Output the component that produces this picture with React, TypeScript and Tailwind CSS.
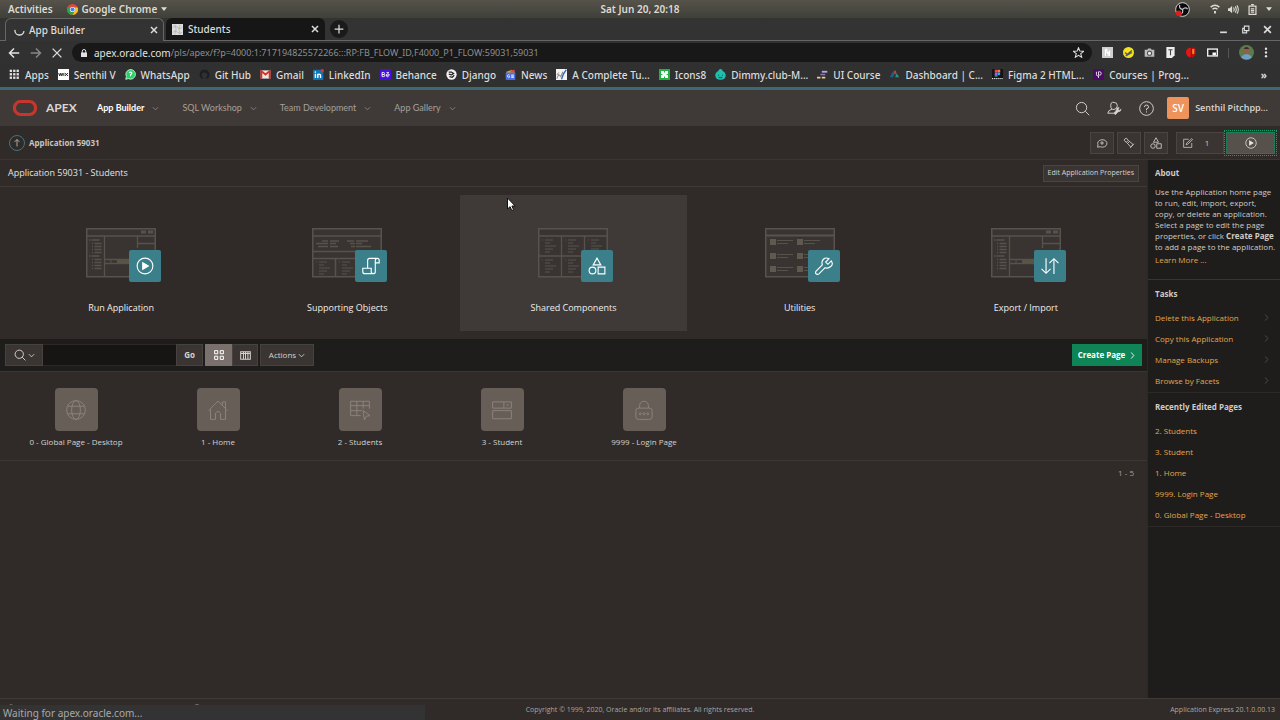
import React, { useState } from 'react';

/* ---------- small line icons ---------- */

function Icon({ className = 'size-4', sw = 1, children }: { className?: string; sw?: number; children: React.ReactNode }) {
  return (
    <svg viewBox="0 0 16 16" className={className + ' shrink-0'} fill="none" stroke="currentColor" strokeWidth={sw} aria-hidden="true">
      {children}
    </svg>
  );
}

const Chevron = ({ className = 'size-2' }: { className?: string }) => (
  <Icon className={className} sw={2}><path d="M2 5l6 6 6-6" /></Icon>
);

const ChevronRight = ({ className = 'size-2' }: { className?: string }) => (
  <Icon className={className} sw={2}><path d="M5 1l6 7-6 7" /></Icon>
);

const SearchShape = () => (
  <>
    <circle cx="7" cy="7" r="5.5" />
    <path d="M11 11l4.2 4.2" />
  </>
);

const PlayShape = () => (
  <>
    <circle cx="8" cy="8" r="7" />
    <path d="M6 5l5 3-5 3z" fill="currentColor" />
  </>
);

const ShapesShape = () => (
  <>
    <path d="M8 1L4.6 7h6.8z" />
    <circle cx="4" cy="12" r="3" />
    <path d="M9 9h6v6H9z" />
  </>
);

/* ---------- bookmark favicons ---------- */

const favicons: Record<string, React.ReactNode> = {
  apps: (
    <g fill="#e0e0e0">
      {[1, 6, 11].map((y) => [1, 6, 11].map((x) => <rect key={x + '-' + y} x={x} y={y} width="3.4" height="3.4" />))}
    </g>
  ),
  wix: (
    <>
      <rect width="16" height="16" fill="#fff" />
      <path d="M1 6l1.5 4L4 6l1.5 4L7 6M8.5 6v4M10 6l4.5 4M14.5 6L10 10" stroke="#111" strokeWidth="1.3" fill="none" />
    </>
  ),
  whatsapp: (
    <>
      <path d="M1 15l1-4a7 7 0 1 1 3 3z" fill="#25d366" stroke="#fff" strokeWidth="1" />
      <path d="M6 5.5q2-2 4 0q.5 1.5-2 3v2" stroke="#fff" strokeWidth="1.6" fill="none" />
    </>
  ),
  github: (
    <path d="M8 1a7 7 0 0 0-2.5 13.6v-2.6c-2-1-2.5-5 0-6.5q2.5-.8 5 0c2.5 1.5 2 5.5 0 6.5v2.6A7 7 0 0 0 8 1z" fill="#1b1f23" />
  ),
  gmail: (
    <>
      <rect x="1" y="2" width="14" height="12" fill="#e8e8e8" />
      <path d="M2 14V3l6 5 6-5v11" stroke="#d93025" strokeWidth="2.6" fill="none" />
    </>
  ),
  linkedin: (
    <>
      <rect y="1" width="15" height="15" rx="1" fill="#0a76b8" />
      <path d="M3.5 7v6M7 13V7m0 3q0-2.5 2-2.5t2 2.5v3" stroke="#fff" strokeWidth="2" fill="none" />
      <rect x="2.5" y="3.5" width="2" height="2" fill="#fff" />
      <circle cx="13.5" cy="2.5" r="2.5" fill="#d33" />
    </>
  ),
  behance: (
    <>
      <rect width="16" height="16" rx="2" fill="#4610e0" />
      <path d="M3 5v6h2.5a1.5 1.5 0 0 0 0-3H3h2a1.5 1.5 0 0 0 0-3zM9 9h4.5a2.2 2.2 0 1 0-1 2M9.5 5h3.5" stroke="#fff" strokeWidth="1.3" fill="none" />
    </>
  ),
  django: (
    <>
      <circle cx="8" cy="8" r="7.5" fill="#f2f2f2" />
      <path d="M4 4.5h4l3 2-3 2-4-1M5 11l4 1 3-3" stroke="#222" strokeWidth="1.8" fill="none" />
    </>
  ),
  news: (
    <>
      <path d="M2 4l8-3 4 3v4H2z" fill="#e2a52c" />
      <path d="M8 2l6-1v4H8z" fill="#d9483b" />
      <rect x="1" y="5" width="14" height="11" rx="1" fill="#4b6fe0" />
      <path d="M6.5 8.5a2 2 0 1 0 0 3.5v-1.5H5.5M9 8.8h4M9 10.5h4M9 12.2h4" stroke="#fff" strokeWidth="1.2" fill="none" />
    </>
  ),
  complete: (
    <>
      <rect width="16" height="16" fill="#f4f4f4" />
      <path d="M1 14l3-6 3 3 3-7" stroke="#888" strokeWidth="1.5" fill="none" />
      <path d="M8 15l3-8 4-6" stroke="#3668b0" strokeWidth="2" fill="none" />
      <path d="M1 9l3-4" stroke="#c33" strokeWidth="1" />
    </>
  ),
  icons8: (
    <>
      <rect width="16" height="16" fill="#1fb141" />
      <path d="M4 4h8v8H4z" fill="#fff" stroke="#fff" strokeWidth="2" />
      <path d="M8 3v2M8 11v2M3 8h2M11 8h2" stroke="#1fb141" strokeWidth="1.5" />
    </>
  ),
  dimmy: (
    <>
      <path d="M8 0c2 0 3 1.5 3 3 3 1 5 4 4.5 7S13 15.5 8 15.5 1 13 .5 10 2 4 5 3c0-1.5 1-3 3-3z" fill="#1fbfae" />
      <path d="M4.5 9H6M10 9h1.5M5.5 12q2.5 1.5 5 0" stroke="#0c5a54" strokeWidth="1.5" fill="none" />
    </>
  ),
  uicourse: (
    <>
      <path d="M7 4h8" stroke="#b9a6e8" strokeWidth="2.6" />
      <path d="M5 8h7" stroke="#8b7ab8" strokeWidth="2" />
      <path d="M0 12.5h5M7 12.5h5" stroke="#f0c987" strokeWidth="2.6" />
    </>
  ),
  dashboard: (
    <>
      <path d="M1 12l5-9 2 4-2 5z" fill="#1f5f86" />
      <path d="M7 3l3-1 1 5-3 1z" fill="#b0483a" />
      <path d="M9 12l2-6 4 6z" fill="#2f8f8a" />
    </>
  ),
  figma: (
    <>
      <rect width="16" height="16" fill="#141414" />
      <path d="M4 1h4v4H4z" fill="#f24e1e" />
      <path d="M8 1h4v4H8z" fill="#ff7262" />
      <path d="M4 5h4v4H4z" fill="#a259ff" />
      <circle cx="10" cy="7" r="2" fill="#1abcfe" />
      <path d="M4 9h4v2H4z" fill="#0acf83" />
      <path d="M0 14h16" stroke="#ddd" strokeWidth="2" strokeDasharray="2 1" />
    </>
  ),
  courses: (
    <>
      <rect width="16" height="16" fill="#4a0a66" />
      <path d="M5 4v4q0 2 2 2h1v3M8 9V4h1.5a2.5 2.5 0 0 1 0 5z" stroke="#fff" strokeWidth="1.2" fill="none" />
    </>
  ),
};

const bookmarks = [
  { icon: 'apps', label: 'Apps' },
  { icon: 'wix', label: 'Senthil V' },
  { icon: 'whatsapp', label: 'WhatsApp' },
  { icon: 'github', label: 'Git Hub' },
  { icon: 'gmail', label: 'Gmail' },
  { icon: 'linkedin', label: 'LinkedIn' },
  { icon: 'behance', label: 'Behance' },
  { icon: 'django', label: 'Django' },
  { icon: 'news', label: 'News' },
  { icon: 'complete', label: 'A Complete Tu...' },
  { icon: 'icons8', label: 'Icons8' },
  { icon: 'dimmy', label: 'Dimmy.club-M...' },
  { icon: 'uicourse', label: 'UI Course' },
  { icon: 'dashboard', label: 'Dashboard | C...' },
  { icon: 'figma', label: 'Figma 2 HTML...' },
  { icon: 'courses', label: 'Courses | Prog...' },
];

/* ---------- desktop bar and browser ---------- */

function DesktopBar() {
  return (
    <div className="grid h-[18px] grid-cols-3 items-center bg-linear-to-b from-[#55534a] to-[#403f3a] px-2 text-[10px] leading-4 font-semibold text-[#dedbd3]">
      <div className="flex items-center gap-[14px]">
        <button type="button">Activities</button>
        <button type="button" className="flex items-center gap-1">
          <svg viewBox="0 0 16 16" className="size-[11px]" aria-hidden="true">
            <circle cx="8" cy="8" r="8" fill="#dd4b3e" />
            <path d="M1 4.2A8 8 0 0 0 8 16l3.5-6z" fill="#2ba24c" />
            <path d="M15.5 5A8 8 0 0 1 8 16l3.5-6L10 5z" fill="#fbc116" />
            <circle cx="8" cy="8" r="3.8" fill="#fff" />
            <circle cx="8" cy="8" r="3" fill="#4285f4" />
          </svg>
          Google Chrome
          <svg viewBox="0 0 8 5" className="h-1 w-[6px]" aria-hidden="true"><path d="M0 0h8L4 5z" fill="currentColor" /></svg>
        </button>
      </div>
      <time className="text-center">Sat Jun 20, 20:18</time>
      <div className="flex items-center justify-end gap-2">
        <svg viewBox="0 0 16 16" className="mr-3 size-[15px]" aria-hidden="true">
          <circle cx="8" cy="8" r="7.3" fill="#0b0b0b" stroke="#ddd" />
          <path d="M8 8q-4-1-3-5M8 8q3-3 5.5-.5M8 8q1 4-2 5" stroke="#ccc" strokeWidth="1.2" fill="none" />
          <circle cx="4" cy="12" r="3" fill="#e01b1b" />
        </svg>
        <svg viewBox="0 0 16 16" className="size-[10px]" fill="none" stroke="currentColor" strokeWidth="2.2" aria-hidden="true">
          <path d="M1 5q7-6 14 0" /><path d="M4 8.5q4-3.5 8 0" /><path d="M6.5 11h3v4h-3z" fill="currentColor" stroke="none" />
        </svg>
        <svg viewBox="0 0 16 16" className="size-[11px]" fill="none" stroke="currentColor" strokeWidth="1.6" aria-hidden="true">
          <path d="M0 6h2.5L6 2.5v11L2.5 10H0z" fill="currentColor" stroke="none" />
          <path d="M8 5q2 3 0 6M10.5 3.5q3 4.5 0 9M13 2q4 6 0 12" />
        </svg>
        <svg viewBox="0 0 16 16" className="size-[11px]" fill="none" stroke="currentColor" strokeWidth="1.8" aria-hidden="true">
          <path d="M3 3h10v12H3zM6 1h4M5.5 7h5M5.5 9.5h5M5.5 12h5" />
        </svg>
        <svg viewBox="0 0 8 5" className="h-1 w-[6px]" aria-hidden="true"><path d="M0 0h8L4 5z" fill="currentColor" /></svg>
      </div>
    </div>
  );
}

function TabStrip() {
  return (
    <div className="flex h-[23px] items-stretch border-b border-[#666] bg-[#333] pl-[5px] text-[10px] leading-4 font-medium text-[#dcdcdc]">
      <div role="tablist" className="flex gap-[2px]">
        <button type="button" role="tab" aria-selected="true" className="-mb-px flex w-[159px] items-center rounded-t-md border border-b-0 border-[#666] bg-[#333] pr-[5px] pl-2">
          <Icon className="size-[11px]" sw={2}><path d="M1.5 7a6.5 6.5 0 0 0 13 2" /></Icon>
          <span className="ml-1 flex-1 text-left">App Builder</span>
          <Icon className="size-2" sw={3}><path d="M2 2l12 12M14 2L2 14" /></Icon>
        </button>
        <button type="button" role="tab" aria-selected="false" className="flex w-[159px] items-center rounded-t-md bg-[#161616] pr-[6px] pl-[6px]">
          <svg viewBox="0 0 16 16" className="size-[11px]" aria-hidden="true">
            <rect width="16" height="16" fill="#ddd" />
            <path d="M1 5q4-4 7 0t7 0M1 12q4-4 7 0t7 0M4 1q4 7 0 14M12 1q-4 7 0 14" stroke="#aaa" fill="none" />
          </svg>
          <span className="ml-[5px] flex-1 text-left">Students</span>
          <Icon className="size-2" sw={3}><path d="M2 2l12 12M14 2L2 14" /></Icon>
        </button>
      </div>
      <button type="button" aria-label="New tab" className="ml-[5px] flex size-[18px] items-center justify-center self-center rounded-full bg-[#1a1a1a]">
        <Icon className="size-[10px]" sw={2}><path d="M8 1v14M1 8h14" /></Icon>
      </button>
      <div className="ml-auto flex items-center gap-[13px] pr-2">
        <button type="button" aria-label="Minimize"><Icon className="size-[9px]" sw={3}><path d="M2 13h12" /></Icon></button>
        <button type="button" aria-label="Restore"><Icon className="size-[9px]" sw={2}><path d="M6 2h8v8H6zM6 6H3v8h7v-4" /></Icon></button>
        <button type="button" aria-label="Close"><Icon className="size-[9px]" sw={3}><path d="M2 2l12 12M14 2L2 14" /></Icon></button>
      </div>
    </div>
  );
}

function AddressBar() {
  return (
    <div className="flex h-[23px] items-center bg-[#313131] pr-3 pl-2 text-[10px] leading-4 text-[#e2e2e2]">
      <div className="flex w-16 items-center gap-[10px]">
        <button type="button" aria-label="Back"><Icon className="size-3" sw={2}><path d="M15 8H2M8 2L2 8l6 6" /></Icon></button>
        <button type="button" aria-label="Forward" className="text-[#888]"><Icon className="size-3" sw={2}><path d="M1 8h13M8 2l6 6-6 6" /></Icon></button>
        <button type="button" aria-label="Stop"><Icon className="size-[10px]" sw={2}><path d="M1 1l14 14M15 1L1 15" /></Icon></button>
      </div>
      <div className="flex h-[19px] flex-1 items-center rounded-full bg-[#181818] px-2">
        <svg viewBox="0 0 16 16" className="size-2 shrink-0" aria-hidden="true">
          <path d="M2 7h12v9H2z" fill="currentColor" /><path d="M4.5 8V4.5a3.5 3.5 0 0 1 7 0V8" stroke="currentColor" strokeWidth="2" fill="none" />
        </svg>
        <label htmlFor="url" className="ml-[6px]">apex.oracle.com</label>
        <input id="url" type="text" defaultValue="/pls/apex/f?p=4000:1:717194825572266:::RP:FB_FLOW_ID,F4000_P1_FLOW:59031,59031" className="flex-1 bg-transparent text-[9px] text-[#8f8f8f] outline-none" />
        <button type="button" aria-label="Bookmark this page"><Icon className="size-[11px]" sw={1.5}><path d="M8 1l2 5 5.5.3-4.3 3.4 1.5 5.3L8 12l-4.700 3 1.500-5.300L.5 6.300 6 6z" /></Icon></button>
      </div>
      <div className="ml-[10px] flex items-center gap-[10px]">
        <svg viewBox="0 0 16 16" className="size-[11px]" aria-hidden="true"><rect width="16" height="16" fill="#cfcfcf" /><path d="M5 13V3.5h2v4h2v5.5M11 5v8M7 9h4" stroke="#fff" strokeWidth="1.6" fill="none" /></svg>
        <svg viewBox="0 0 16 16" className="size-[11px]" aria-hidden="true"><circle cx="8" cy="8" r="8" fill="#f6e21c" /><path d="M3 8l3 3 7-6M4 13l9-5" stroke="#4b5a70" strokeWidth="2" fill="none" /></svg>
        <svg viewBox="0 0 16 16" className="size-[11px]" aria-hidden="true"><path d="M1 4h4l1-2h4l1 2h4v10H1z" fill="#bdbdbd" /><circle cx="8" cy="9" r="3" fill="#eee" stroke="#555" strokeWidth="1.5" /></svg>
        <svg viewBox="0 0 16 16" className="size-[11px]" aria-hidden="true"><path d="M2 0h12v12l-4 4H2z" fill="#eee" /><path d="M5 4h6M8 4v8" stroke="#444" strokeWidth="1.6" fill="none" /></svg>
        <svg viewBox="0 0 16 16" className="size-[11px]" aria-hidden="true"><path d="M7 1A7 7 0 0 0 7 15z" fill="#e11" /><path d="M8 1h5q4 9-3 14H8z" fill="#b8150d" /><path d="M9 3h3v7H9z" fill="#f08a1c" /></svg>
        <svg viewBox="0 0 16 16" className="size-[11px]" aria-hidden="true"><rect y="2" width="16" height="12" fill="#eee" /><rect x="2" y="4" width="12" height="8" fill="#222" /><rect x="8" y="8" width="5" height="4" fill="#fff" /></svg>
        <span className="h-[10px] w-px bg-[#555]" />
        <svg viewBox="0 0 16 16" className="size-[15px]" aria-hidden="true"><circle cx="8" cy="8" r="8" fill="#5d7a4c" /><circle cx="8" cy="6" r="3.5" fill="#8c6248" /><path d="M5 4q3-3 6 0z" fill="#1d1a18" /><path d="M2 13q6-7 12 0-6 5-12 0z" fill="#6f9fc8" /></svg>
        <button type="button" aria-label="Browser menu"><svg viewBox="0 0 4 16" className="h-[11px] w-1" fill="currentColor" aria-hidden="true"><circle cx="2" cy="2.5" r="1.7" /><circle cx="2" cy="8" r="1.7" /><circle cx="2" cy="13.5" r="1.7" /></svg></button>
      </div>
    </div>
  );
}

function Bookmarks() {
  return (
    <nav aria-label="Bookmarks" className="flex h-[23px] items-center gap-[9px] bg-[#303030] px-[9px] pb-[2px] text-[10px] leading-4 font-medium text-[#dcdcdc]">
      {bookmarks.map((b) => (
        <a key={b.label} href="#" className="flex items-center gap-[5px] whitespace-nowrap">
          <svg viewBox="0 0 16 16" className="size-[11px] shrink-0" aria-hidden="true">{favicons[b.icon]}</svg>
          {b.label}
        </a>
      ))}
      <button type="button" className="mr-1 ml-auto font-bold">»</button>
    </nav>
  );
}

/* ---------- APEX header ---------- */

const menus = ['App Builder', 'SQL Workshop', 'Team Development', 'App Gallery'];

function ApexHeader() {
  return (
    <header className="flex h-9 items-center bg-[#3f3a37] px-3 text-[9px] leading-4">
      <svg viewBox="0 0 26 18" className="h-[18px] w-[26px]" aria-hidden="true"><rect x="2.5" y="2.5" width="21" height="13" rx="6" fill="none" stroke="#c8352c" strokeWidth="3.2" /></svg>
      <span className="ml-2 w-[51px] font-['Lato',sans-serif] text-[12px] font-bold text-[#d8d5d2]">APEX</span>
      <nav className="flex gap-[23px] font-['Lato',sans-serif]">
        {menus.map((m, i) => (
          <button key={m} type="button" className={i === 0 ? 'flex items-center gap-2 font-bold text-white' : 'flex items-center gap-2 text-[#a5a09b]'}>
            {m}
            <Chevron className="size-[7px] text-[#8d8883]" />
          </button>
        ))}
      </nav>
      <div className="ml-auto flex items-center gap-[17px] text-[#d8d5d2]">
        <button type="button" aria-label="Search"><Icon className="size-[15px]"><SearchShape /></Icon></button>
        <button type="button" aria-label="Administration">
          <Icon className="size-[15px]"><path d="M7.5 1.5q3.5 0 3.5 3.5T7.5 9 4 5t3.5-3.5zM5.5 8.5Q1 10 .8 13h8M11 11.5l-2.5 3" /><path d="M15 8.5l-2 1.5-1-1 1-2q-3-.5-3 2.5L7.5 13 9 14.5l3-3q3 0 3-3z" fill="currentColor" strokeWidth=".5" /></Icon>
        </button>
        <button type="button" aria-label="Help"><Icon className="size-[15px]"><circle cx="8" cy="8" r="7.3" /><path d="M5.8 6.5q0-2.2 2.2-2.2t2.2 2Q10.2 8 8 8.3v1.5M8 11v1.3" /></Icon></button>
        <button type="button" className="-ml-1 flex items-center gap-[6px] font-semibold">
          <span className="flex size-[22px] items-center justify-center rounded-xs bg-[#ef935c] text-[10px] text-white">SV</span>
          Senthil Pitchpp...
        </button>
      </div>
    </header>
  );
}

function BreadcrumbBar() {
  const box = 'flex h-[22px] items-center justify-center border border-[#4a4542] bg-[#3a3532]';
  return (
    <div className="flex h-[34px] items-center border-b border-[#3b3633] pr-2 pl-[9px] text-[8px] leading-4 text-[#c9c5c1]">
      <a href="#" className="flex items-center gap-1 font-bold">
        <span className="flex size-[16px] items-center justify-center rounded-full border border-[#41747a]">
          <Icon className="size-2" sw={1.6}><path d="M8 15V1M3 6l5-5 5 5" /></Icon>
        </span>
        Application 59031
      </a>
      <div className="-mr-[5px] ml-auto flex items-center gap-[3px]">
        <button type="button" aria-label="Feedback" className={box + ' w-6'}><Icon className="size-3" sw={1.2}><path d="M2 13.5l.7-3A6.2 5 0 1 1 5.5 13zM8 5.5v5M5.5 8h5" /></Icon></button>
        <button type="button" aria-label="Find" className={box + ' w-6'}><Icon className="size-3" sw={1.2}><path d="M1.5 4.5q.5-2.5 3-3L7 4.500 13.500 10 10.500 13.500 4.500 7zM4.500 7L7 4.500M9.500 14.500l5-5.500M6.500 6.500L8 8" /></Icon></button>
        <button type="button" aria-label="Shared components" className={box + ' w-6'}><Icon className="size-3" sw={1.2}><ShapesShape /></Icon></button>
        <button type="button" className={box + ' ml-[5px] w-12 gap-3 pr-2'}>
          <Icon className="size-[10px]" sw={1.3}><path d="M14 8v7H1V2h8M5 11l1-3 8-7 1.5 1.5-8 7.5z" /></Icon>
          1
        </button>
        <button type="button" aria-label="Run page" className="-ml-[3px] flex h-[26px] w-[53px] items-center justify-center border border-dotted border-[#13a06c] p-px">
          <span className="flex h-full w-full items-center justify-center border border-[#1f7a58] bg-[#57514c] text-[#e8e5e2]"><Icon className="size-3"><PlayShape /></Icon></span>
        </button>
      </div>
    </div>
  );
}

/* ---------- wireframe illustrations behind the badges ---------- */

const line = '#57524c';

const lines = (x: number, y: number) => (
  <path d={`M${x} ${y}h1M${x + 3} ${y}h8M${x + 3} ${y + 3}h5M${x + 3} ${y + 6}h11M${x + 3} ${y + 9}h8M${x + 3} ${y + 12}h5`} stroke={line} />
);

const wireframes: Record<string, React.ReactNode> = {
  builder: (
    <>
      <path d="M1 8h68M18.5 8v41M51.5 8v12M51.5 15.5h18M18.5 31.5h33M18.5 35.5h33" stroke={line} strokeWidth="1.3" />
      <path d="M55 4h5M62 4h5" stroke={line} strokeWidth="3" />
      <path d="M3 12h1.5M5.5 12h8M6 15.5h1M8.5 15.5h7M6 18.5h1M8.5 18.5h7M6 21.5h1M8.5 21.5h7M6 24.5h1M8.5 24.5h7M3 28h1.5M5.5 28h8M6 31.5h1M8.5 31.5h7M6 34.5h1M8.5 34.5h7M6 37.5h1M8.5 37.5h7M6 40.5h1M8.5 40.5h7" stroke={line} strokeWidth="1.3" />
      <path d="M31 33.5h16" stroke="#5a5347" strokeWidth="3" />
      <path d="M25 32v3" stroke={line} />
    </>
  ),
  objects: (
    <>
      <path d="M1 8h68M1 23.5h68M1 30.5h68M23.5 30v19" stroke={line} strokeWidth="1.5" />
      <path d="M10 13h6M18 13h9M4 15.5h12M18 15.5h6M6 18.5h10M18 18.5h8M35 13h7M44 13h12M38 15.5h5M44 15.5h6M39 18.5h4M44 18.5h15" stroke={line} strokeWidth="1.3" />
      {lines(4, 34)}
      {lines(27, 34)}
    </>
  ),
  shared: (
    <>
      <path d="M1 8h68M1 28h68M23.5 8v41M46.5 8v41" stroke={line} strokeWidth="1.3" />
      {lines(4, 12)}
      {lines(27, 12)}
      {lines(50, 12)}
      {lines(4, 32)}
      {lines(27, 32)}
    </>
  ),
  utilities: (
    <>
      <path d="M1 7.5h68" stroke={line} strokeWidth="2" />
      {[11, 25, 38].map((y) => [5, 32].map((x) => (
        <g key={x + '-' + y}>
          <rect x={x} y={y} width="6" height="6" fill="#5f594f" />
          <path d={`M${x + 7} ${y + 1.5}h16M${x + 7} ${y + 4.5}h11`} stroke={line} />
        </g>
      )))}
    </>
  ),
};

const badgeIcons: Record<string, React.ReactNode> = {
  play: <PlayShape />,
  scroll: <path d="M5 10V3q0-1.8 1.8-1.8h6.7q1.8 0 1.8 1.8v2.2h-3.5V3q0-1.5 1.5-1.8M11.8 5v8q0 1.8-1.8 1.8H2.5q-1.8 0-1.8-1.8v-3h7.5v3q0 1.8 1.8 1.8" />,
  shapes: <ShapesShape />,
  wrench: <path d="M14.5 3.5l-3 3-2-2 3-3q-3-1.5-5 .5T6.500 7l-5.500 5.500q-1 1.500 0 2.500t2.500 0L9 9.500q2.500 1 5-1t.5-5z" />,
  arrows: <path d="M4.5 1v13.5M.5 10.5l4 4 4-4M11.5 15V1.5M7.5 5.5l4-4 4 4" />,
};

const actions = [
  { label: 'Run Application', art: 'builder', badge: 'play' },
  { label: 'Supporting Objects', art: 'objects', badge: 'scroll' },
  { label: 'Shared Components', art: 'shared', badge: 'shapes', active: true },
  { label: 'Utilities', art: 'utilities', badge: 'wrench' },
  { label: 'Export / Import', art: 'builder', badge: 'arrows' },
];

function ActionCards() {
  return (
    <section className="grid grid-cols-5 p-2">
      {actions.map((a) => (
        <a key={a.label} href="#" className={a.active ? 'flex h-[136px] flex-col items-center bg-[#3f3a37] pt-[33px]' : 'flex h-[136px] flex-col items-center pt-[33px]'}>
          <div className="relative">
            <svg viewBox="0 0 70 50" className="h-[50px] w-[70px]" fill="none" aria-hidden="true">
              <rect x=".75" y=".75" width="68.5" height="48" fill="#393431" stroke={line} strokeWidth="1.5" />
              {wireframes[a.art]}
            </svg>
            <span className="absolute -right-[5px] -bottom-1 flex size-8 items-center justify-center rounded-xs bg-[#3a7f8a] text-white">
              <Icon className="size-[18px]">{badgeIcons[a.badge]}</Icon>
            </span>
          </div>
          <span className="mt-[22px] text-[9px] leading-4 text-[#f0edea]">{a.label}</span>
        </a>
      ))}
    </section>
  );
}

/* ---------- page report ---------- */

const pageIcons: Record<string, React.ReactNode> = {
  globe: <><circle cx="8" cy="8" r="7.5" /><ellipse cx="8" cy="8" rx="3.5" ry="7.5" /><path d="M1.3 5h13.4M1.3 11h13.4" /></>,
  home: <path d="M.5 8.5L8 .8l7.5 7.7M2 7.500v8h4v-5q2-2.500 4 0v5h4v-8M11.500 4V1.500h2.500V7" />,
  grid: <path d="M8.5 12.5H.5V1h15v6M.5 4.5h15M.5 8.5h9M5.5 1v11.5M10.5 1v6M10.5 8.5l5.5 4-3 .5-1.5 3z" />,
  form: <path d="M.5 1.5h15v5H.5zM.5 8.5h15v6.5H.5zM9.5 1.5v5M11.5 4h2" />,
  lock: <><rect x="1.5" y="6.5" width="13" height="9" rx="2" /><path d="M4.5 6.5V4.5a3.5 3.5 0 0 1 7 0v2" /><circle cx="5" cy="11" r=".8" /><circle cx="8" cy="11" r=".8" /><circle cx="11" cy="11" r=".8" /></>,
};

const pages = [
  { icon: 'globe', label: '0 - Global Page - Desktop' },
  { icon: 'home', label: '1 - Home' },
  { icon: 'grid', label: '2 - Students' },
  { icon: 'form', label: '3 - Student' },
  { icon: 'lock', label: '9999 - Login Page' },
];

function ReportToolbar() {
  const [query, setQuery] = useState('');
  const btn = 'flex h-[22px] items-center justify-center border border-[#47423f] bg-[#3a3532]';
  return (
    <div className="flex h-[33px] items-center border-b border-[#3b3633] bg-[#1f1d1b] px-[5px] text-[8px] leading-4 text-[#d6d2ce]">
      <button type="button" aria-label="Search columns" className={btn + ' w-[38px] gap-[2px]'}>
        <Icon className="size-3" sw={1.3}><SearchShape /></Icon>
        <Chevron className="size-[7px]" />
      </button>
      <input type="text" aria-label="Search" value={query} onChange={(e) => setQuery(e.target.value)} className="h-[22px] w-[133px] border-y border-[#2b2826] bg-[#171513] px-1 outline-none" />
      <button type="button" className={btn + ' w-[27px] font-bold'}>Go</button>
      <button type="button" aria-label="View icons" className="ml-[2px] flex h-[22px] w-[27px] items-center justify-center bg-[#7b716c] text-white">
        <Icon className="size-[10px]" sw={1.6}><path d="M1 1h5v5H1zM10 1h5v5h-5zM1 10h5v5H1zM10 10h5v5h-5z" /></Icon>
      </button>
      <button type="button" aria-label="View report" className={btn + ' w-[26px]'}>
        <Icon className="size-[11px]" sw={1.5}><path d="M1 2.500h14v11H1zM1 5h14M5 3v10.500M8 3v10.500M11.500 3v10.500" /></Icon>
      </button>
      <button type="button" className={btn + ' ml-[2px] w-[54px] gap-[2px]'}>Actions<Chevron className="size-[7px]" /></button>
      <button type="button" className="ml-auto flex h-[22px] w-[70px] items-center justify-center gap-1 bg-[#0e8457] font-bold text-white">
        Create Page<ChevronRight className="size-[7px]" />
      </button>
    </div>
  );
}

function PageList() {
  return (
    <>
      <ul className="flex h-[89px] border-b border-[#3b3633] px-[5px] pt-4">
        {pages.map((p) => (
          <li key={p.label} className="w-[142px]">
            <a href="#" className="flex flex-col items-center">
              <span className="flex size-[43px] items-center justify-center rounded-sm bg-[#675e58] text-[#8b827b]">
                <Icon className="size-[20px]" sw={0.8}>{pageIcons[p.icon]}</Icon>
              </span>
              <span className="mt-[3px] text-[8px] leading-4 text-[#d6d2ce]">{p.label}</span>
            </a>
          </li>
        ))}
      </ul>
      <p className="px-[13px] pt-1 text-right text-[8px] leading-4 text-[#a5a09b]">1 - 5</p>
    </>
  );
}

/* ---------- right column ---------- */

const tasks = ['Delete this Application', 'Copy this Application', 'Manage Backups', 'Browse by Facets'];
const recent = ['2. Students', '3. Student', '1. Home', '9999. Login Page', '0. Global Page - Desktop'];

function SideColumn() {
  return (
    <aside className="w-[133px] shrink-0 border-l border-[#2b2826] bg-[#1f1d1b] text-[8px] text-[#cfcbc7]">
      <section className="h-[120px] border-b border-[#393431] px-[7px] pt-[5px]">
        <h2 className="leading-4 font-bold">About</h2>
        <p className="mt-[5px] leading-[11px] whitespace-nowrap">
          Use the Application home page<br />
          to run, edit, import, export,<br />
          copy, or delete an application.<br />
          Select a page to edit the page<br />
          properties, or click <b>Create Page</b><br />
          to add a page to the application.
        </p>
        <a href="#" className="block leading-4 text-[#e2a54d]">Learn More ...</a>
      </section>
      <section className="h-[113px] border-b border-[#2c2927] px-[7px] pt-[6px]">
        <h2 className="mb-[5px] leading-4 font-bold">Tasks</h2>
        <ul className="text-[#e2a54d]">
          {tasks.map((t) => (
            <li key={t}>
              <a href="#" className="flex h-[21px] items-center justify-between">
                {t}
                <ChevronRight className="mr-[3px] size-[7px] text-[#55504c]" />
              </a>
            </li>
          ))}
        </ul>
      </section>
      <section className="h-[134px] border-b border-[#2c2927] px-[7px] pt-[6px]">
        <h2 className="mb-[5px] leading-4 font-bold">Recently Edited Pages</h2>
        <ul className="text-[#e2a54d]">
          {recent.map((r) => (
            <li key={r}>
              <a href="#" className="flex h-[21px] items-center">{r}</a>
            </li>
          ))}
        </ul>
      </section>
    </aside>
  );
}

function Footer() {
  return (
    <footer className="flex h-[22px] items-center border-t border-[#403b38] px-[5px] text-[7px] leading-4 text-[#aaa5a0]">
      <div className="flex flex-1 items-center">
        <div className="w-[131px]"><Icon className="size-3"><circle cx="8" cy="4.5" r="3.5" /><path d="M1 15q7-9 14 0" /></Icon></div>
        <div className="w-[55px]"><Icon className="size-3"><path d="M1 2h14v9H8l-4 4v-4H1z" /></Icon></div>
        <Icon className="size-3"><circle cx="8" cy="8" r="7" /></Icon>
      </div>
      <p>Copyright © 1999, 2020, Oracle and/or its affiliates. All rights reserved.</p>
      <p className="flex-1 text-right">Application Express 20.1.0.00.13</p>
    </footer>
  );
}

export default function App() {
  return (
    <div className="relative flex h-screen flex-col overflow-hidden bg-[#302b28] font-['Noto_Sans','Open_Sans',sans-serif]">
      <DesktopBar />
      <TabStrip />
      <AddressBar />
      <Bookmarks />

      <div className="flex flex-1 flex-col border-t-[3px] border-[#3c6a74] font-['Open_Sans','Noto_Sans',sans-serif]">
        <ApexHeader />
        <BreadcrumbBar />
        <div className="flex flex-1">
          <main className="min-w-0 flex-1">
            <div className="flex h-[27px] items-center justify-between border-b border-[#3f3a37] px-2">
              <h1 className="text-[9px] leading-4 text-[#e6e3e0]">Application 59031 - Students</h1>
              <button type="button" className="h-[17px] border border-[#4a4542] bg-[#3a3532] px-1 text-[7px] text-[#d6d2ce]">Edit Application Properties</button>
            </div>
            <ActionCards />
            <ReportToolbar />
            <PageList />
          </main>
          <SideColumn />
        </div>
        <Footer />
      </div>

      {/* loading status bubble */}
      <div role="status" className="absolute bottom-0 left-0 h-[15px] w-[425px] bg-[#333] px-[3px] text-[10px] leading-4 text-[#a9a9a9]">
        Waiting for apex.oracle.com...
      </div>

      {/* mouse pointer */}
      <svg viewBox="0 0 10 16" className="absolute top-[197px] left-[506px] h-4 w-[10px]" aria-hidden="true">
        <path d="M1.5 1v11l2.6-2.3 1.7 3.8 1.8-.8-1.7-3.700h3.300z" fill="#fff" stroke="#111" />
      </svg>
    </div>
  );
}
